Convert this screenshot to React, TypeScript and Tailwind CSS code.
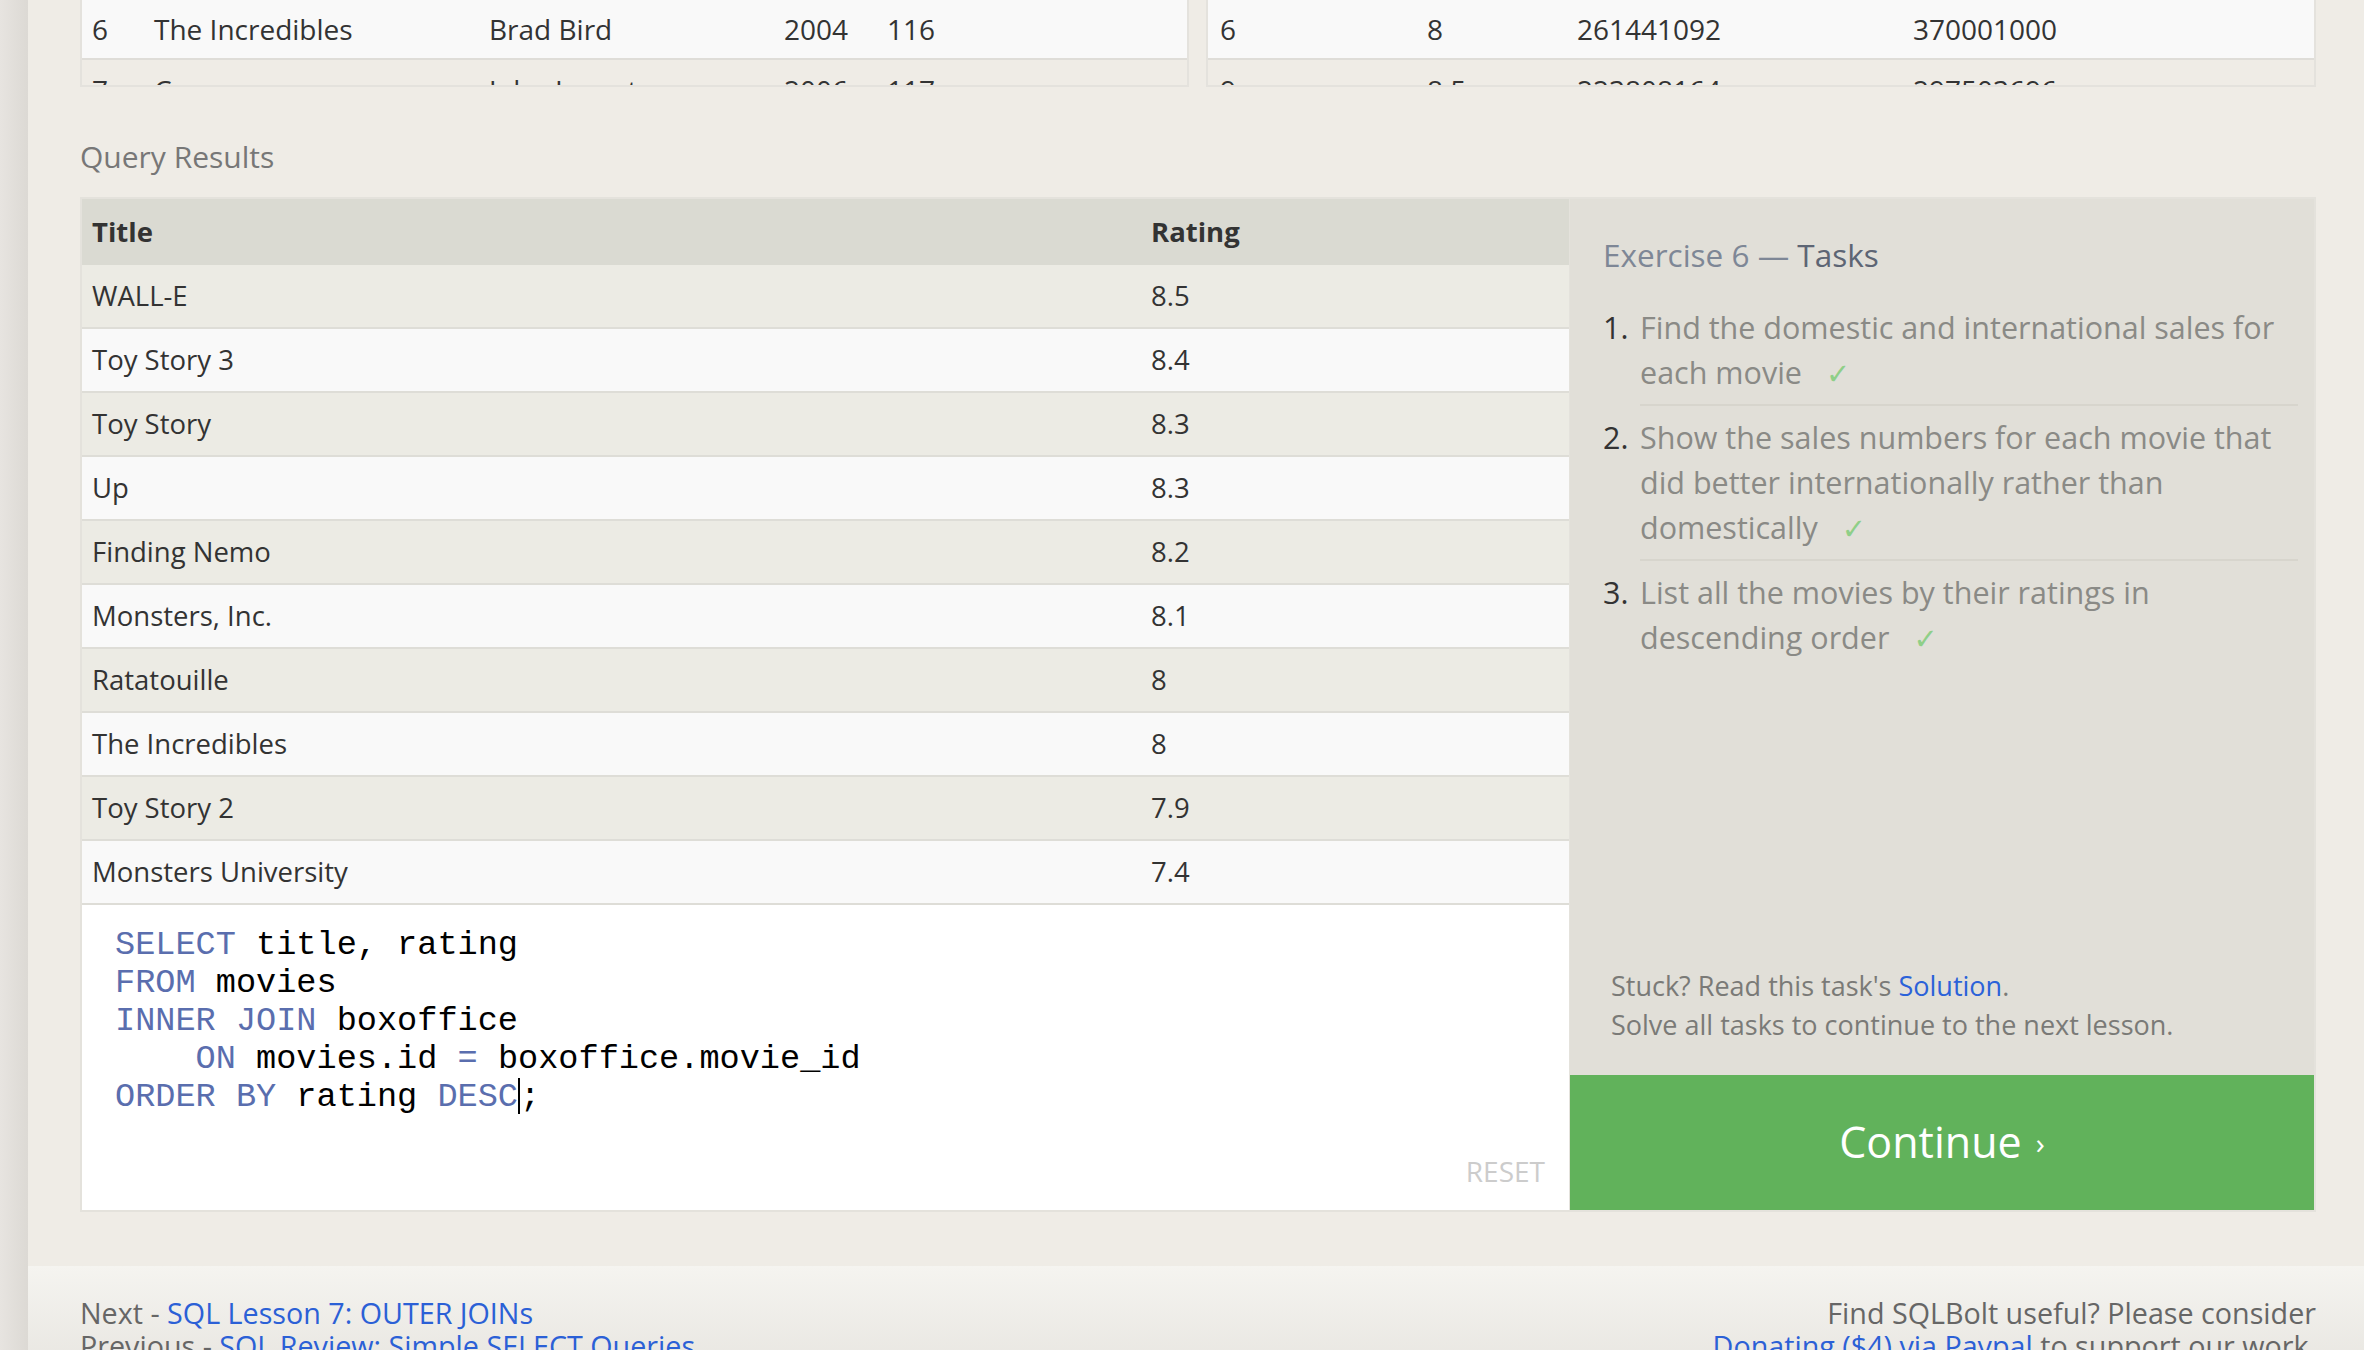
const movies = [
  ["WALL-E", "8.5"],
  ["Toy Story 3", "8.4"],
  ["Toy Story", "8.3"],
  ["Up", "8.3"],
  ["Finding Nemo", "8.2"],
  ["Monsters, Inc.", "8.1"],
  ["Ratatouille", "8"],
  ["The Incredibles", "8"],
  ["Toy Story 2", "7.9"],
  ["Monsters University", "7.4"],
]

const tasks = [
  "Find the domestic and international sales for each movie",
  "Show the sales numbers for each movie that did better internationally rather than domestically",
  "List all the movies by their ratings in descending order",
]

function Kw({ children }: { children: React.ReactNode }) {
  return <span className="text-[#5a6eae]">{children}</span>
}

function TopTables() {
  return (
    <div className="flex gap-[17px] text-[28px] text-[#333]">
      <div className="w-[1109px] h-[87px] overflow-hidden border-x-2 border-b-2 border-[#e4e2dd]">
        <div className="flex items-center h-[60px] bg-[#f9f9f9] border-b-2 border-[#dfddd8] pl-[10px]">
          <span className="w-[62px]">6</span>
          <span className="w-[335px]">The Incredibles</span>
          <span className="w-[295px]">Brad Bird</span>
          <span className="w-[103px]">2004</span>
          <span>116</span>
        </div>
        <div className="flex items-center h-[60px] pl-[10px]">
          <span className="w-[62px]">7</span>
          <span className="w-[335px]">Cars</span>
          <span className="w-[295px]">John Lasseter</span>
          <span className="w-[103px]">2006</span>
          <span>117</span>
        </div>
      </div>
      <div className="flex-1 h-[87px] overflow-hidden border-x-2 border-b-2 border-[#e4e2dd]">
        <div className="flex items-center h-[60px] bg-[#f9f9f9] border-b-2 border-[#dfddd8] pl-[12px]">
          <span className="w-[207px]">6</span>
          <span className="w-[150px]">8</span>
          <span className="w-[336px]">261441092</span>
          <span>370001000</span>
        </div>
        <div className="flex items-center h-[60px] pl-[12px]">
          <span className="w-[207px]">9</span>
          <span className="w-[150px]">8.5</span>
          <span className="w-[336px]">223808164</span>
          <span>297503696</span>
        </div>
      </div>
    </div>
  )
}

function ResultsTable() {
  return (
    <div className="text-[27.5px] text-[#333]">
      <div className="flex items-center h-[66px] bg-[#dadad2] font-bold px-[10px]">
        <span className="w-[1059px]">Title</span>
        <span>Rating</span>
      </div>
      {movies.map(([title, rating], i) => (
        <div
          key={title}
          className={`flex items-center h-[64px] border-b-2 border-[#deddd7] px-[10px] ${
            i % 2 === 0 ? "bg-[#ecebe4]" : "bg-[#f9f9f9]"
          }`}
        >
          <span className="w-[1059px]">{title}</span>
          <span>{rating}</span>
        </div>
      ))}
    </div>
  )
}

function Editor() {
  return (
    <div className="flex-1 flex flex-col bg-white pl-[33px] pr-[24px] pt-[21px] pb-[18px]">
      <pre className="font-['Liberation_Mono','Courier_New',monospace] text-[33.6px] leading-[38px] text-black">
        <Kw>SELECT</Kw> title, rating{"\n"}
        <Kw>FROM</Kw> movies{"\n"}
        <Kw>INNER JOIN</Kw> boxoffice{"\n"}
        {"    "}<Kw>ON</Kw> movies.id <Kw>=</Kw> boxoffice.movie_id{"\n"}
        <Kw>ORDER BY</Kw> rating <Kw>DESC</Kw>
        <span className="inline-block w-0 h-[36px] border-l-2 border-black align-[-8px]" />;
      </pre>
      <span className="mt-auto self-end text-[28px] text-[#cccccc]">RESET</span>
    </div>
  )
}

function TaskPanel() {
  return (
    <div className="flex-1 flex flex-col">
      <div className="flex-1 flex flex-col bg-[#e1dfd8] pl-[33px] pr-[16px] pt-[36px] pb-[31px]">
        <h2 className="text-[31.5px] leading-[40px] text-[#7e8796]">
          Exercise 6 — <span className="text-[#5d6574]">Tasks</span>
        </h2>
        <ol className="mt-[30px] text-[30.5px] leading-[45px]">
          {tasks.map((t, i) => (
            <li key={t} className={`flex ${i > 0 ? "mt-[9px]" : ""}`}>
              <span className="w-[37px] shrink-0 text-[#333]">{i + 1}.</span>
              <span
                className={`flex-1 text-[#8a8a86] ${
                  i < tasks.length - 1 ? "pb-[7px] border-b-2 border-[#d7d5cd]" : ""
                }`}
              >
                {t}
                <span className="ml-[24px] text-[#8fcf88] font-['DejaVu_Sans',sans-serif] text-[29px]">✓</span>
              </span>
            </li>
          ))}
        </ol>
        <div className="mt-auto pl-[8px] text-[27px] leading-[39px] text-[#7a7a77]">
          <p>
            Stuck? Read this task's <a className="text-[#2b62d9]">Solution</a>.
          </p>
          <p>Solve all tasks to continue to the next lesson.</p>
        </div>
      </div>
      <div className="h-[135px] flex items-center justify-center bg-[#61b25b] text-white text-[43px]">
        Continue <span className="ml-[14px] text-[30px]">›</span>
      </div>
    </div>
  )
}

export default function App() {
  return (
    <div className="flex h-[1350px] w-full overflow-hidden bg-[#efece6] font-['Open_Sans',sans-serif]">
      <div className="w-[28px] shrink-0 bg-gradient-to-r from-[#e7e4e0] to-[#dcd9d4]" />
      <div className="flex-1 flex flex-col min-w-0">
        <div className="pl-[52px] pr-[48px]">
          <TopTables />
          <h3 className="mt-[51px] text-[30px] leading-[38px] text-[#777]">Query Results</h3>
          <div className="mt-[21px] flex h-[1015px] border-2 border-[#e4e2dc]">
            <div className="w-[1488px] flex flex-col border-r border-[#e4e2dc]">
              <ResultsTable />
              <Editor />
            </div>
            <TaskPanel />
          </div>
        </div>
        <footer className="mt-[54px] flex-1 flex justify-between pl-[52px] pr-[48px] pt-[30px] bg-gradient-to-b from-[#f5f4f0] to-[#e9e7e2] text-[28.7px] leading-[33px] text-[#666]">
          <div>
            <p>
              Next - <a className="text-[#2b60d6]">SQL Lesson 7: OUTER JOINs</a>
            </p>
            <p>
              Previous - <a className="text-[#2b60d6]">SQL Review: Simple SELECT Queries</a>
            </p>
          </div>
          <div className="text-right">
            <p>Find SQLBolt useful? Please consider</p>
            <p>
              <a className="text-[#2b60d6]">Donating ($4) via Paypal</a> to support our work.
            </p>
          </div>
        </footer>
      </div>
    </div>
  )
}
